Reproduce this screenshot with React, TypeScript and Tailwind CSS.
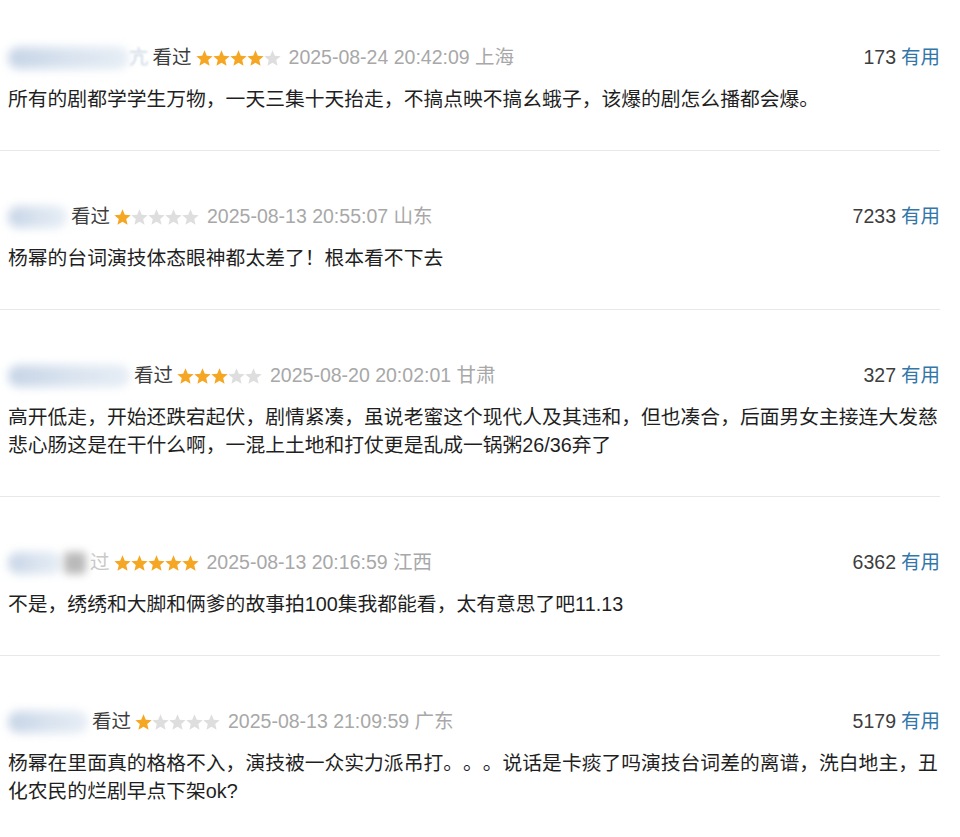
import React from "react";

interface Review {
  nameWidth: number;
  tail?: string;
  watched: boolean;
  rating: number;
  time: string;
  place: string;
  votes: number;
  text: string;
  extraBlob?: boolean;
}

const reviews: Review[] = [
  {
    nameWidth: 121,
    tail: "亢",
    watched: true,
    rating: 4,
    time: "2025-08-24 20:42:09",
    place: "上海",
    votes: 173,
    text: "所有的剧都学学生万物，一天三集十天抬走，不搞点映不搞幺蛾子，该爆的剧怎么播都会爆。",
  },
  {
    nameWidth: 59,
    watched: true,
    rating: 1,
    time: "2025-08-13 20:55:07",
    place: "山东",
    votes: 7233,
    text: "杨幂的台词演技体态眼神都太差了！根本看不下去",
  },
  {
    nameWidth: 122,
    watched: true,
    rating: 3,
    time: "2025-08-20 20:02:01",
    place: "甘肃",
    votes: 327,
    text: "高开低走，开始还跌宕起伏，剧情紧凑，虽说老蜜这个现代人及其违和，但也凑合，后面男女主接连大发慈悲心肠这是在干什么啊，一混上土地和打仗更是乱成一锅粥26/36弃了",
  },
  {
    nameWidth: 54,
    extraBlob: true,
    watched: false,
    rating: 5,
    time: "2025-08-13 20:16:59",
    place: "江西",
    votes: 6362,
    text: "不是，绣绣和大脚和俩爹的故事拍100集我都能看，太有意思了吧11.13",
  },
  {
    nameWidth: 80,
    watched: true,
    rating: 1,
    time: "2025-08-13 21:09:59",
    place: "广东",
    votes: 5179,
    text: "杨幂在里面真的格格不入，演技被一众实力派吊打。。。说话是卡痰了吗演技台词差的离谱，洗白地主，丑化农民的烂剧早点下架ok?",
  },
];

function Star({ on }: { on: boolean }) {
  return (
    <svg width="17" height="16" viewBox="0 0 17 16" className="shrink-0">
      <polygon
        points="8.5,0.2 10.79,5.64 16.68,6.14 12.21,10.01 13.56,15.76 8.5,12.7 3.44,15.76 4.79,10.01 0.32,6.14 6.21,5.64"
        fill={on ? "#f5a623" : "#dedede"}
      />
    </svg>
  );
}

function Stars({ rating }: { rating: number }) {
  return (
    <span className="flex items-center">
      {[1, 2, 3, 4, 5].map((i) => (
        <Star key={i} on={i <= rating} />
      ))}
    </span>
  );
}

function ReviewItem({ r, first }: { r: Review; first: boolean }) {
  return (
    <div
      className={`border-b border-[#e8e8e8] pl-2 w-[940px] pb-[37px] ${
        first ? "pt-[44px]" : "pt-[52px]"
      }`}
    >
      {/* 用户行 */}
      <div className="flex items-center justify-between h-[28px] text-[19.5px]">
        <div className="flex items-center">
          <span
            className="h-[22px] rounded-full bg-gradient-to-r from-[#c6d4e6] via-[#d9e3ef] to-[#e6edf5] blur-[5px]"
            style={{ width: r.nameWidth }}
          />
          {r.extraBlob && (
            <span className="h-[22px] w-[22px] ml-[2px] rounded bg-[#b9b9b9] blur-[4px]" />
          )}
          {r.tail && <span className="text-[#c8d4e2] blur-[1px]">{r.tail}</span>}
          <span className="text-[#3d3d3d] ml-[4px]">
            {r.watched ? "看过" : <span className="text-[#c9c9c9]">过</span>}
          </span>
          <span className="ml-[4px]">
            <Stars rating={r.rating} />
          </span>
          <span className="ml-[8px] text-[#a8a8a8]">
            {r.time} {r.place}
          </span>
        </div>
        <div className="flex items-center">
          <span className="text-[#3d3d3d]">{r.votes}</span>
          <span className="ml-[5px] text-[#3377aa]">有用</span>
        </div>
      </div>

      {/* 短评内容 */}
      <p className="mt-[13px] text-[19.8px] leading-[28px] text-[#1f1f1f] [text-spacing-trim:space-all]">
        {r.text}
      </p>
    </div>
  );
}

export default function App() {
  return (
    <div
      className="min-h-[837px] bg-white overflow-hidden"
      style={{ fontFamily: '"Liberation Sans", "Noto Sans CJK SC", sans-serif' }}
    >
      {reviews.map((r, i) => (
        <ReviewItem key={i} r={r} first={i === 0} />
      ))}
    </div>
  );
}
